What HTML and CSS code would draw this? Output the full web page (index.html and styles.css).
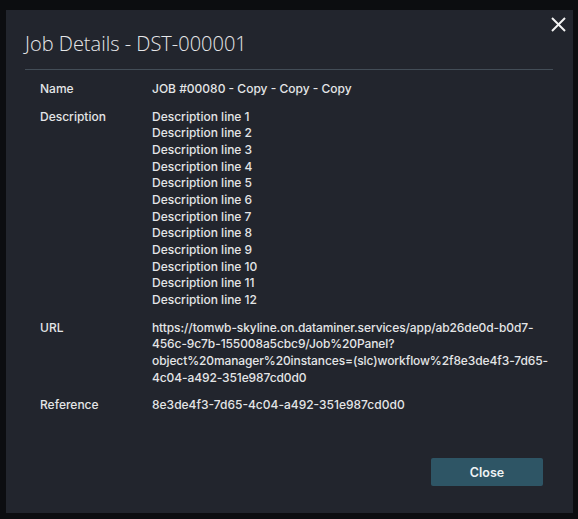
FILE: index.html
```html
<!DOCTYPE html>
<html>
<head>
    <link rel="stylesheet" href="styles.css">
</head>
<body>
    <div class="dialog">
        <button class="dialog-close" title="Close">
            <svg width="15" height="15" viewBox="0 0 15 15" fill="none" stroke="currentColor" stroke-width="2">
                <line x1="1" y1="1" x2="14" y2="14"></line>
                <line x1="14" y1="1" x2="1" y2="14"></line>
            </svg>
        </button>

        <div class="dialog-header">
            <h1 class="dialog-title">Job Details - DST-000001</h1>
        </div>

        <div class="details">
            <div class="detail-row">
                <div class="detail-label">Name</div>
                <div class="detail-value">JOB #00080 - Copy - Copy - Copy</div>
            </div>
            <div class="detail-row">
                <div class="detail-label">Description</div>
                <div class="detail-value">
                    Description line 1<br>
                    Description line 2<br>
                    Description line 3<br>
                    Description line 4<br>
                    Description line 5<br>
                    Description line 6<br>
                    Description line 7<br>
                    Description line 8<br>
                    Description line 9<br>
                    Description line 10<br>
                    Description line 11<br>
                    Description line 12
                </div>
            </div>
            <div class="detail-row">
                <div class="detail-label">URL</div>
                <div class="detail-value url">https://tomwb-skyline.on.dataminer.services/app/ab26de0d-b0d7-456c-9c7b-155008a5cbc9/Job%20Panel?object%20manager%20instances=(slc)workflow%2f8e3de4f3-7d65-4c04-a492-351e987cd0d0</div>
            </div>
            <div class="detail-row">
                <div class="detail-label">Reference</div>
                <div class="detail-value">8e3de4f3-7d65-4c04-a492-351e987cd0d0</div>
            </div>
        </div>

        <div class="dialog-footer">
            <button class="btn-primary">Close</button>
        </div>
    </div>
</body>
</html>
```

FILE: styles.css
```css
body {
    margin: 0;
    padding: 0;
    background: #0c0d10;
    color: #e4e5e7;
    font-family: Inter, "Liberation Sans", sans-serif;
}

.dialog {
    position: relative;
    box-sizing: border-box;
    height: 503px;
    margin: 10px 5px 6px 6px;
    padding: 0 20px 0 19px;
    background: #22252d;
    display: flex;
    flex-direction: column;
}

.dialog-close {
    position: absolute;
    top: 7px;
    right: 7px;
    padding: 0;
    background: transparent;
    border: none;
    color: #f4f4f4;
    cursor: pointer;
    display: flex;
}

.dialog-header {
    padding: 20px 0 11px 0;
    border-bottom: 1px solid #434d57;
}

.dialog-title {
    margin: 0;
    font-family: "Open Sans", sans-serif;
    font-weight: 300;
    font-size: 20px;
    line-height: 28px;
    color: #e6e7e9;
}

.details {
    padding: 11px 0 0 15px;
    display: flex;
    flex-direction: column;
    gap: 11px;
    font-size: 12px;
    font-weight: 500;
    line-height: 16.66px;
}

.detail-row {
    display: flex;
}

.detail-label {
    width: 112px;
    flex-shrink: 0;
}

.detail-value {
    width: 400px;
}

.url {
    word-break: break-word;
    letter-spacing: -0.1px;
}

.dialog-footer {
    margin-top: auto;
    padding: 0 10px 27px 0;
    display: flex;
    justify-content: flex-end;
}

.btn-primary {
    width: 112px;
    height: 28px;
    border: none;
    border-radius: 2px;
    background: #2e5565;
    color: #eef2f4;
    font-family: Inter, "Liberation Sans", sans-serif;
    font-weight: 600;
    font-size: 12.5px;
    cursor: pointer;
}
```
